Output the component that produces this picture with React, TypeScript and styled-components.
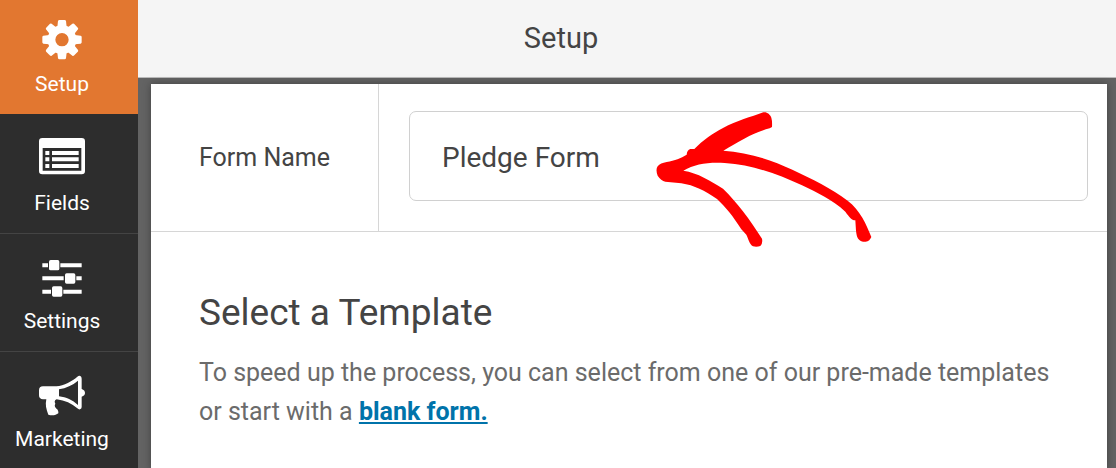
import React from "react";
import styled, { createGlobalStyle } from "styled-components";

const GlobalStyle = createGlobalStyle`
  *, *::before, *::after { box-sizing: border-box; }
  body {
    margin: 0;
    background: #636363;
    font-family: Roboto, "Liberation Sans", sans-serif;
    color: #444;
  }
`;

const Layout = styled.div`
  display: grid;
  grid-template-columns: 138px minmax(0, 1fr);
  height: 100vh;
  overflow: hidden;
`;

const Sidebar = styled.nav`
  display: flex;
  flex-direction: column;
  background: #2d2d2d;
`;

const NavButton = styled.button<{ $active?: boolean }>`
  display: flex;
  flex-direction: column;
  align-items: center;
  flex: none;
  gap: ${(p) => (p.$active ? "8px" : "9px")};
  height: ${(p) => (p.$active ? "116px" : "118px")};
  margin: 0;
  padding: ${(p) => (p.$active ? "16px" : "18px")} 14px 0 0;
  border: 0;
  border-bottom: ${(p) => (p.$active ? "2px solid #2d2d2d" : "1px solid #444")};
  background: ${(p) => (p.$active ? "#e27730" : "#2d2d2d")};
  color: #fff;
  font-family: inherit;
  font-size: 21px;
  line-height: 24px;
  cursor: pointer;
`;

const NavIcon = styled.svg`
  display: block;
  width: 48px;
  height: 48px;
`;

const Main = styled.main`
  display: flex;
  flex-direction: column;
  min-width: 0;
`;

const Header = styled.header`
  display: flex;
  align-items: center;
  justify-content: center;
  flex: none;
  height: 78px;
  padding: 0 132px 2px 0;
  border-bottom: 1px solid #bbb;
  background: #f5f5f5;
  font-size: 29px;
  line-height: 32px;
`;

const Stage = styled.div`
  display: flex;
  flex: 1;
  padding: 6px 9px 0 13px;
  background: #636363;
`;

const Panel = styled.section`
  flex: 1;
  min-width: 0;
  background: #fff;
  box-shadow: 0 0 8px rgba(0, 0, 0, 0.35);
`;

const FormRow = styled.div`
  display: grid;
  grid-template-columns: 228px minmax(0, 1fr);
  border-bottom: 1px solid #d6d6d6;
`;

const FieldLabel = styled.label`
  display: flex;
  align-items: center;
  padding-left: 48px;
  border-right: 1px solid #d6d6d6;
  font-size: 25px;
  line-height: 32px;
`;

const FieldCell = styled.div`
  position: relative;
  padding: 27px 19px 30px 30px;
`;

const TextInput = styled.input`
  display: block;
  width: 100%;
  height: 90px;
  padding: 2px 32px 0;
  border: 1px solid #d0d0d0;
  border-radius: 7px;
  background: #fff;
  color: #444;
  font-family: inherit;
  font-size: 28px;
  outline: none;
`;

const Arrow = styled.svg`
  position: absolute;
  top: 11px;
  left: 261px;
  width: 240px;
  height: 160px;
  pointer-events: none;
`;

const Intro = styled.div`
  padding: 57px 48px 0 48px;
`;

const Title = styled.h1`
  margin: 0;
  font-size: 37px;
  font-weight: 400;
  line-height: 48px;
`;

const Lead = styled.p`
  margin: 16px 0 0;
  color: #6b6b6b;
  font-size: 25px;
  line-height: 39px;
`;

const BlankLink = styled.a`
  color: #0073aa;
  font-weight: 700;
  text-decoration: underline;
`;

const GearIcon = () => (
  <NavIcon viewBox="0 0 144 144" aria-hidden="true">
    <g transform="translate(72 71)" fill="currentColor">
      {[0, 45, 90, 135, 180, 225, 270, 315].map((angle) => (
        <path
          key={angle}
          d="M-14-38 L-12-56 Q-11-59-8-59 H8 Q11-59 12-56 L14-38Z"
          transform={`rotate(${angle})`}
        />
      ))}
      <path
        fillRule="evenodd"
        d="M0-43a43 43 0 1 1 0 86a43 43 0 1 1 0-86Z M0-20a20 20 0 1 0 0 40a20 20 0 1 0 0-40Z"
      />
    </g>
  </NavIcon>
);

const FieldsIcon = () => (
  <NavIcon viewBox="0 0 144 144" aria-hidden="true">
    <g fill="currentColor" transform="translate(0 -5)">
      <path
        fillRule="evenodd"
        d="M13 17H131Q141 17 141 27V116Q141 126 131 126H13Q3 126 3 116V27Q3 17 13 17Z M14 47V115H130V47Z"
      />
      <path d="M22 56H34V68H22ZM42 56H122V68H42ZM22 75H34V87H22ZM42 75H122V87H42ZM22 95H34V107H22ZM42 95H122V107H42Z" />
    </g>
  </NavIcon>
);

const SlidersIcon = () => (
  <NavIcon viewBox="0 0 144 144" aria-hidden="true">
    <g fill="currentColor" transform="translate(0 7)">
      <path d="M13 27H30V39H13ZM67 27H131V39H67ZM13 66H77V78H13ZM115 66H131V78H115ZM13 106H39V118H13ZM76 106H131V118H76Z" />
      <rect x="33" y="17" width="31" height="31" rx="5" />
      <rect x="81" y="57" width="31" height="31" rx="5" />
      <rect x="42" y="96" width="31" height="31" rx="5" />
    </g>
  </NavIcon>
);

const MegaphoneIcon = () => (
  <NavIcon viewBox="0 0 144 144" aria-hidden="true">
    <path
      fill="currentColor"
      fillRule="evenodd"
      d="M15 49H55C78 47 103 33 118 20Q123 16 127 18Q131 20 131 26V57Q141 60 141 69Q141 77 131 80V111Q131 117 126 118Q122 119 118 115C101 100 81 91 56 88C49 91 49 96 52 101C48 107 51 113 59 119L61 125L61 130C54 136 42 138 31 134C25 118 21 104 25 88H15Q3 87 3 76V61Q3 49 15 49Z M63 58V79C85 82 103 90 120 105V32C103 46 85 54 63 58Z"
    />
  </NavIcon>
);

const navItems = [
  { label: "Setup", Icon: GearIcon },
  { label: "Fields", Icon: FieldsIcon },
  { label: "Settings", Icon: SlidersIcon },
  { label: "Marketing", Icon: MegaphoneIcon },
];

export default function App() {
  return (
    <>
      <GlobalStyle />
      <Layout>
        <Sidebar aria-label="Form builder">
          {navItems.map(({ label, Icon }, index) => (
            <NavButton key={label} type="button" $active={index === 0}>
              <Icon />
              <span>{label}</span>
            </NavButton>
          ))}
        </Sidebar>
        <Main>
          <Header>Setup</Header>
          <Stage>
            <Panel>
              <FormRow>
                <FieldLabel htmlFor="form-name">Form Name</FieldLabel>
                <FieldCell>
                  <TextInput id="form-name" type="text" defaultValue="Pledge Form" />
                  <Arrow viewBox="0 0 720 480" aria-hidden="true">
                    <path
                      fill="#f00"
                      d="M370 52C381 50 390 58 394 68Q397 78 396 96L389 100C344 111 300 137 250 167C320 171 390 193 457 224C515 251 575 280 623 317C661 346 679 388 694 426C688 439 681 441 669 440C655 437 650 427 648 407L646 376C634 376 628 366 616 350C577 314 532 293 486 271C414 238 338 209 254 204C205 201 165 207 130 227C174 234 211 257 249 281C292 323 328 371 366 431Q369 445 361 453Q350 457 339 454C328 447 326 434 319 419L304 403C280 365 258 337 231 312C194 287 163 271 124 265L76 260Q63 257 53 242Q46 224 53 214Q61 204 80 201C105 196 122 190 140 179Q141 165 151 162H163C190 134 219 115 249 99C291 77 332 66 370 52Z"
                    />
                  </Arrow>
                </FieldCell>
              </FormRow>
              <Intro>
                <Title>Select a Template</Title>
                <Lead>
                  To speed up the process, you can select from one of our pre-made templates or
                  start with a <BlankLink href="#blank">blank form.</BlankLink>
                </Lead>
              </Intro>
            </Panel>
          </Stage>
        </Main>
      </Layout>
    </>
  );
}
